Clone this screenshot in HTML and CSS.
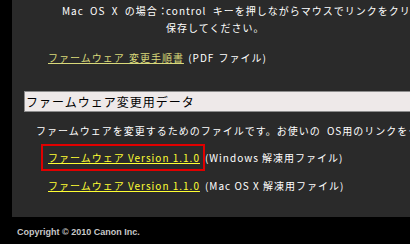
FILE: index.html
```html
<!DOCTYPE html>
<html lang="ja">
<head>
    <meta charset="UTF-8">
    <meta name="viewport" content="width=device-width, initial-scale=1.0">
    <title>ファームウェア変更</title>
    <link rel="stylesheet" href="styles.css">
</head>
<body>
    <div class="page">
        <div class="notes">
            <span class="note-label">Mac OS X の場合：</span>
            <span class="note-text">control キーを押しながらマウスでリンクをクリックし、「ディスクにダウンロード」を選択して<br>保存してください。</span>
        </div>

        <p class="manual">
            <a href="#" class="visited">ファームウェア 変更手順書</a> (PDF ファイル)
        </p>

        <h2 class="section-title">ファームウェア変更用データ</h2>

        <p class="desc">ファームウェアを変更するためのファイルです。お使いの OS用のリンクをクリックしてください。</p>

        <ul class="downloads">
            <li><a href="#" class="dl selected">ファームウェア Version 1.1.0</a>(Windows 解凍用ファイル)</li>
            <li><a href="#" class="dl">ファームウェア Version 1.1.0</a>(Mac OS X 解凍用ファイル)</li>
        </ul>
    </div>

    <div class="footer">Copyright &copy; 2010 Canon Inc.</div>
</body>
</html>
```

FILE: styles.css
```css
body {
    margin: 0;
    background-color: #000;
    overflow: hidden;
    font-family: "Noto Sans CJK JP", "Noto Sans", sans-serif;
    font-size: 10px;
    letter-spacing: 1px;
    word-spacing: 3px;
    color: #fff;
}
.page {
    margin-left: 12px;
    width: 600px;
    height: 217px;
    padding: 2px 12px 0;
    box-sizing: border-box;
    background-color: #2a2a2a;
}
.notes {
    display: flex;
    margin-left: 38px;
    line-height: 17px;
    white-space: nowrap;
}
.note-label {
    width: 104px;
    flex-shrink: 0;
}
.manual {
    margin: 13px 0 0 24px;
    line-height: 17px;
    white-space: nowrap;
    word-spacing: 1px;
}
a {
    color: #ffff33;
    text-decoration: underline;
}
a.visited {
    color: #d9d97a;
}
.section-title {
    margin: 25px 0 0;
    height: 19px;
    padding-left: 1px;
    background-color: #eee9e9;
    border: 1px solid #8c8c8c;
    color: #000;
    font-size: 12px;
    font-weight: normal;
    line-height: 19px;
}
.desc {
    margin: 10px 0 0 12px;
    line-height: 17px;
    white-space: nowrap;
}
.downloads {
    list-style-type: none;
    margin: 5px 0 0 17px;
    padding: 0;
    word-spacing: 0;
}
.downloads li {
    line-height: 17px;
    margin-bottom: 1px;
    white-space: nowrap;
}
.dl {
    display: inline-block;
    padding: 3px 3px 3px 5px;
    border: 2px solid transparent;
}
.dl.selected {
    border-color: #e00000;
}
.footer {
    padding: 10px 0 0 17px;
    font-family: "Liberation Sans", Arial, sans-serif;
    font-size: 9px;
    font-weight: bold;
    letter-spacing: 0;
    word-spacing: 0;
    color: #c8c8c8;
}
```
